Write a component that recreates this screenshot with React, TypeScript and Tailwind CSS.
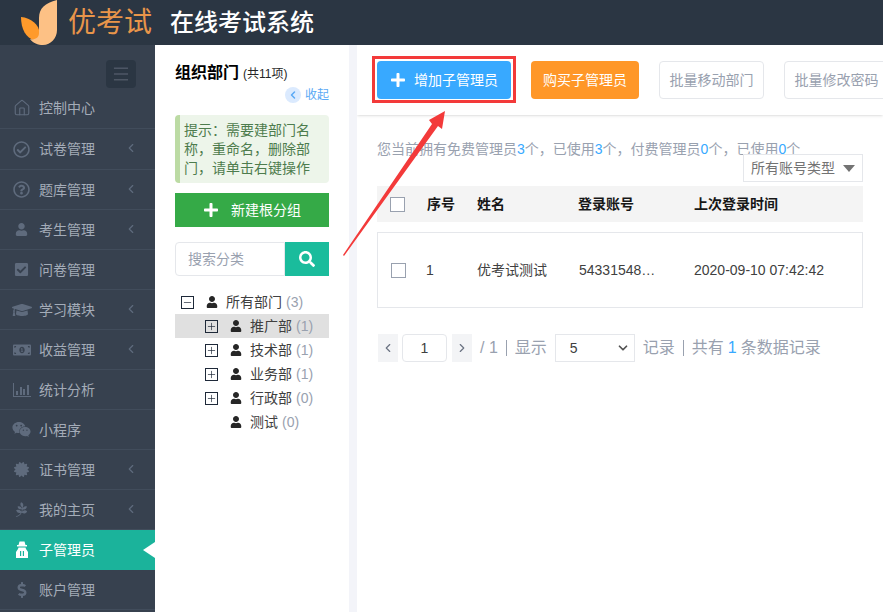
import { ChevronLeft, ChevronRight, ChevronDown, Home, Minus, Plus, Menu } from 'lucide-react'
import {
  FaRegCheckCircle,
  FaRegQuestionCircle,
  FaUser,
  FaCheckSquare,
  FaGraduationCap,
  FaMoneyBillAlt,
  FaWeixin,
  FaCertificate,
  FaPagelines,
  FaDollarSign,
  FaPlus,
  FaSearch,
} from 'react-icons/fa'
import type { ReactNode } from 'react'

const font = { fontFamily: '"Liberation Sans", "Noto Sans CJK SC", sans-serif' }

function AdminIcon() {
  return (
    <svg viewBox="0 0 14 17" className="h-[17px] w-[14px] fill-white">
      <path d="M4.5 0.5h5l1 3.5h1.5v1.5H2V4h1.5zM3.5 6.5h7l.5 1.5 2 3v6H1v-6l2-3z" />
      <rect x="5" y="10" width="1.2" height="5" fill="#1bb39b" />
      <rect x="7.8" y="10" width="1.2" height="5" fill="#1bb39b" />
    </svg>
  )
}

function BarsIcon() {
  return (
    <svg viewBox="0 0 18 14" className="h-[14px] w-[18px] fill-current">
      <path d="M0 0h1v13h17v1H0z" />
      <rect x="3" y="8" width="2" height="4" />
      <rect x="7" y="4" width="2" height="8" />
      <rect x="10" y="6" width="2" height="6" />
      <rect x="14" y="2" width="2" height="10" />
    </svg>
  )
}

const menu: { label: string; icon: ReactNode; arrow?: boolean; active?: boolean }[] = [
  { label: '控制中心', icon: <Home size={18} strokeWidth={1.5} /> },
  { label: '试卷管理', icon: <FaRegCheckCircle size={17} />, arrow: true },
  { label: '题库管理', icon: <FaRegQuestionCircle size={17} />, arrow: true },
  { label: '考生管理', icon: <FaUser size={13} />, arrow: true },
  { label: '问卷管理', icon: <FaCheckSquare size={15} /> },
  { label: '学习模块', icon: <FaGraduationCap size={20} />, arrow: true },
  { label: '收益管理', icon: <FaMoneyBillAlt size={18} />, arrow: true },
  { label: '统计分析', icon: <BarsIcon /> },
  { label: '小程序', icon: <FaWeixin size={19} /> },
  { label: '证书管理', icon: <FaCertificate size={15} />, arrow: true },
  { label: '我的主页', icon: <FaPagelines size={15} />, arrow: true },
  { label: '子管理员', icon: <AdminIcon />, active: true },
  { label: '账户管理', icon: <FaDollarSign size={16} /> },
]

const departments = [
  { name: '推广部', count: 1, expandable: true, selected: true },
  { name: '技术部', count: 1, expandable: true },
  { name: '业务部', count: 1, expandable: true },
  { name: '行政部', count: 0, expandable: true },
  { name: '测试', count: 0 },
]

function TreeBox({ open }: { open?: boolean }) {
  return (
    <span className="flex h-[13px] w-[13px] items-center justify-center border border-gray-800 text-gray-800">
      {open ? <Minus size={11} strokeWidth={1.5} /> : <Plus size={11} strokeWidth={1.5} />}
    </span>
  )
}

function Sidebar() {
  return (
    <aside className="flex w-[155px] shrink-0 flex-col bg-[#37414f]">
      <div className="flex h-[43px] shrink-0 items-start justify-end pt-[15px] pr-[19px]">
        <span className="flex h-7 w-[30px] items-center justify-center rounded bg-[#2b3643] text-gray-500">
          <Menu size={20} strokeWidth={1} />
        </span>
      </div>
      {menu.map((item, i) => (
        <div
          key={item.label}
          className={`relative flex shrink-0 items-center border-b text-sm ${i < 2 ? 'h-[41px]' : 'h-10'} ${
            item.active ? 'border-[#1bb39b] bg-[#1bb39b] text-white' : 'border-[#414c5b] text-[#a4acb8]'
          }`}
        >
          <span className={`flex w-[39px] justify-center pl-1 ${item.active ? 'text-white' : 'text-[#5f6b7d]'}`}>
            {item.icon}
          </span>
          <span>{item.label}</span>
          {item.arrow && <ChevronLeft size={14} className="absolute top-3 right-[17px] text-[#5f6b7d]" />}
          {item.active && (
            <span className="absolute top-3 right-0 border-y-8 border-r-[12px] border-y-transparent border-r-white" />
          )}
        </div>
      ))}
    </aside>
  )
}

function DeptPanel() {
  return (
    <section className="flex w-[194px] shrink-0 flex-col pt-4 pr-5 pl-5">
      <div className="flex items-baseline gap-1 font-bold text-black">
        <span className="text-base">组织部门</span>
        <span className="text-xs font-normal text-neutral-800">(共11项)</span>
      </div>
      <div className="mt-0.5 flex items-center justify-end gap-1 text-xs text-[#5aa9f5]">
        <span className="flex h-4 w-4 items-center justify-center rounded-full bg-blue-100">
          <ChevronLeft size={12} strokeWidth={3} />
        </span>
        收起
      </div>
      <div className="mt-3 h-[68px] rounded-sm border-l-[5px] border-[#bcdba4] bg-[#edf5ea] py-1.5 pl-1 text-sm leading-[19px] text-[#4d7c4d]">
        提示：需要建部门名称，重命名，删除部门，请单击右键操作
      </div>
      <button className="mt-2.5 flex h-[34px] shrink-0 items-center justify-center gap-3 bg-[#35aa47] text-sm text-white">
        <FaPlus size={16} />
        新建根分组
      </button>
      <div className="mt-[15px] flex h-[34px] shrink-0">
        <div className="flex flex-1 items-center rounded-l border border-gray-200 pl-3 text-sm text-gray-400">
          搜索分类
        </div>
        <span className="flex w-11 items-center justify-center bg-[#1abc9c] text-white">
          <FaSearch size={16} />
        </span>
      </div>
      <div className="mt-3.5 text-sm text-neutral-700">
        <div className="flex h-6 items-center pl-1.5">
          <TreeBox open />
          <FaUser size={12} className="mr-2 ml-3 text-neutral-800" />
          所有部门<span className="ml-1 text-gray-400">(3)</span>
        </div>
        {departments.map((d) => (
          <div key={d.name} className={`flex h-6 items-center pl-[30px] ${d.selected ? 'bg-[#e0e0e0]' : ''}`}>
            {d.expandable ? <TreeBox /> : <span className="w-[13px]" />}
            <FaUser size={12} className="mr-2 ml-3 text-neutral-800" />
            {d.name}
            <span className="ml-1 text-gray-400">({d.count})</span>
          </div>
        ))}
      </div>
    </section>
  )
}

function Cb() {
  return <span className="block h-[15px] w-[15px] border border-gray-400 bg-white" />
}

function MainPanel() {
  return (
    <section className="relative min-w-0 flex-1 overflow-hidden">
      <div className="flex h-[70px] items-center gap-5 bg-white pl-5 shadow-sm">
        <button className="flex h-[38px] w-[134px] shrink-0 items-center justify-center gap-2 rounded bg-[#38a9ff] text-sm text-white">
          <FaPlus size={16} />
          增加子管理员
        </button>
        <button className="h-[38px] w-[108px] shrink-0 rounded bg-[#ff9728] text-sm text-white">
          购买子管理员
        </button>
        <button className="h-[38px] w-[105px] shrink-0 rounded border border-gray-200 text-sm text-gray-400">
          批量移动部门
        </button>
        <button className="h-[38px] w-[105px] shrink-0 rounded border border-gray-200 text-sm text-gray-400">
          批量修改密码
        </button>
      </div>
      <div className="px-5 pt-6">
        <p className="text-sm text-gray-400">
          您当前拥有免费管理员<span className="text-[#38a9ff]">3</span>个，已使用<span className="text-[#38a9ff]">3</span>
          个，付费管理员<span className="text-[#38a9ff]">0</span>个，已使用<span className="text-[#38a9ff]">0</span>个
        </p>
        <div className="-mt-[5px] flex justify-end">
          <div className="relative flex h-7 w-[120px] items-center justify-center gap-2 border border-gray-200 bg-white text-sm text-neutral-500">
            所有账号类型
            <span className="border-x-[6px] border-t-[7px] border-x-transparent border-t-neutral-500" />
          </div>
        </div>
        <div className="mt-1 flex h-9 items-center bg-[#f4f4f4] text-sm font-bold text-neutral-900">
          <span className="w-[50px] pl-[13px]">
            <Cb />
          </span>
          <span className="w-[50px]">序号</span>
          <span className="w-[101px]">姓名</span>
          <span className="w-[116px]">登录账号</span>
          <span>上次登录时间</span>
        </div>
        <div className="mt-2.5 flex h-[76px] items-center border border-gray-200 text-sm text-neutral-700">
          <span className="w-[48px] pl-[13px]">
            <Cb />
          </span>
          <span className="w-[51px]">1</span>
          <span className="w-[102px]">优考试测试</span>
          <span className="w-[115px]">54331548…</span>
          <span>2020-09-10 07:42:42</span>
        </div>
        <div className="mt-[26px] flex items-center text-base text-gray-400">
          <span className="ml-px flex h-7 w-5 items-center justify-center bg-gray-100 text-gray-500">
            <ChevronLeft size={14} />
          </span>
          <span className="ml-1 flex h-7 w-[45px] items-center justify-center rounded border border-gray-200 text-sm text-neutral-700">
            1
          </span>
          <span className="ml-[5px] flex h-7 w-5 items-center justify-center bg-gray-100 text-gray-500">
            <ChevronRight size={14} />
          </span>
          <span className="ml-2">/ 1</span>
          <span className="mx-2 h-4 w-px bg-gray-400" />
          <span>显示</span>
          <span className="ml-2 flex h-7 w-20 items-center justify-between border border-gray-200 pr-1 pl-3.5 text-sm text-neutral-700">
            5
            <ChevronDown size={14} strokeWidth={3} className="text-neutral-600" />
          </span>
          <span className="ml-2">记录</span>
          <span className="mx-2 h-4 w-px bg-gray-400" />
          <span>共有</span>
          <span className="mx-1 text-[#38a9ff]">1</span>
          <span>条数据记录</span>
        </div>
      </div>
    </section>
  )
}

export default function App() {
  return (
    <div className="relative flex h-[612px] w-[883px] flex-col overflow-hidden bg-white" style={font}>
      <header className="flex h-[45px] shrink-0 items-center bg-[#2b3643] pl-[21px]">
        <svg viewBox="0 0 37 45" className="h-[45px] w-[37px]">
          <path d="M0 17c10 1 18 7 19 17 0 4-2 6-6 6-8-2-13-11-13-23z" fill="#ff9a2b" />
          <path d="M36 0C24 3 18 8 18 18v15c0 5-4 7-9 6 3 4 8 6 13 6 8 0 14-7 14-15z" fill="#fdc185" />
        </svg>
        <span className="ml-2.5 text-[28px] text-[#e8954a]">优考试</span>
        <span className="ml-[18px] text-2xl font-medium text-white">在线考试系统</span>
      </header>
      <div className="flex min-h-0 flex-1">
        <Sidebar />
        <DeptPanel />
        <span className="w-2 shrink-0 bg-[#f3f4f9]" />
        <MainPanel />
      </div>
      <span className="absolute top-[56px] left-[372px] h-[47px] w-[144px] border-[3px] border-[#f33a3a]" />
      <svg className="absolute top-[105px] left-[340px] h-[155px] w-[110px]" viewBox="0 0 110 155">
        <path d="M3 150 L92 19 L89 15 L105 6 L102 24 L98 21 L4 151 Z" fill="#f33a3a" />
      </svg>
    </div>
  )
}
